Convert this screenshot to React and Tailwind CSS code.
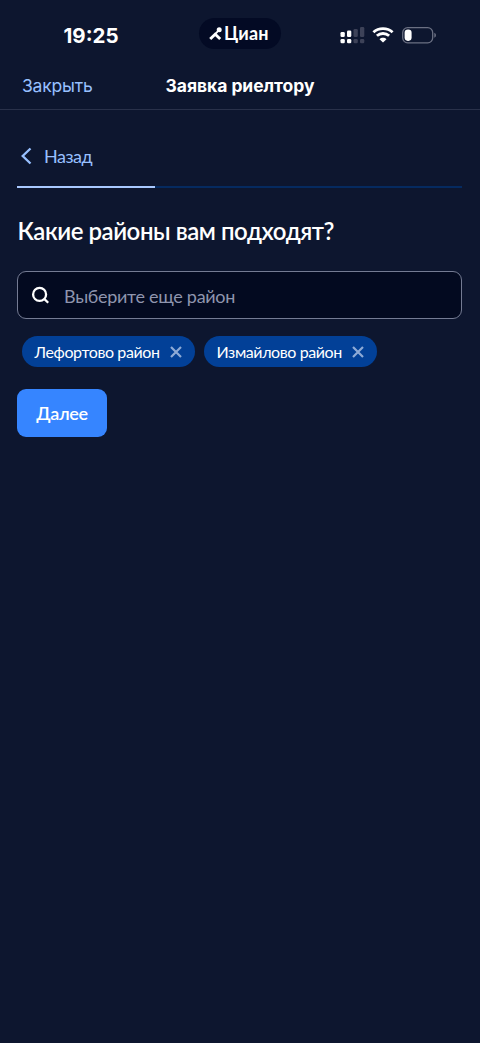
import { useState } from 'react';

const DISTRICTS = ['Лефортово район', 'Измайлово район'];

function CianMark() {
  return (
    <svg width="14" height="14" viewBox="0 0 14 14" fill="none">
      <circle cx="10.2" cy="2.8" r="2.5" fill="#fff" />
      <path d="M9.4 3.6 L6.2 7.2" stroke="#fff" strokeWidth="1.8" />
      <path d="M1.2 12 L6.2 7.2 L11.2 12" stroke="#fff" strokeWidth="2.9" />
    </svg>
  );
}

function Signal() {
  return (
    <svg width="25" height="17" viewBox="0 0 25 17" fill="#fff">
      <rect x="0.5" y="5" width="4.3" height="5" rx="1.3" />
      <rect x="7" y="3.5" width="4.3" height="6.5" rx="1.3" />
      <rect x="13.5" y="2" width="4.3" height="8" rx="1.3" fill="#3d4258" />
      <rect x="20" y="0" width="4.3" height="10" rx="1.3" fill="#3d4258" />
      <rect x="0.5" y="12" width="4.3" height="4.3" rx="1.3" />
      <rect x="7" y="12" width="4.3" height="4.3" rx="1.3" />
      <rect x="13.5" y="12" width="4.3" height="4.3" rx="1.3" fill="#3d4258" />
      <rect x="20" y="12" width="4.3" height="4.3" rx="1.3" fill="#3d4258" />
    </svg>
  );
}

function Wifi() {
  return (
    <svg width="22" height="16" viewBox="0 0 22 16" fill="none" stroke="#fff" strokeWidth="2.8">
      <path d="M1.4 5.2 C6.7 0.3 15.3 0.3 20.6 5.2" />
      <path d="M4.9 8.8 C8.3 5.7 13.7 5.7 17.1 8.8" />
      <path d="M11 15.6 L7.5 12.2 C9.4 10.4 12.6 10.4 14.5 12.2 Z" fill="#fff" stroke="none" />
    </svg>
  );
}

function Battery() {
  return (
    <svg className="ml-[0.5px]" width="35" height="17" viewBox="0 0 35 17" fill="none">
      <rect x="0.7" y="0.7" width="30" height="15.1" rx="5" stroke="#6b7083" strokeWidth="1.3" />
      <rect x="2.6" y="2.6" width="7" height="11.3" rx="3.3" fill="#fff" />
      <path d="M32.3 5.8 C34.5 6.7 34.5 9.9 32.3 10.8 Z" fill="#6b7083" />
    </svg>
  );
}

function StatusBar() {
  return (
    <div className="flex h-[66px] items-start">
      <div className="w-[199px] pt-[21px] pl-[63.5px] font-['Inter',sans-serif] text-[20.5px] leading-[30px] font-bold">
        19:25
      </div>
      <div className="mt-[18px] flex h-[31px] w-[82px] items-center gap-[1px] rounded-full bg-[#030a24] pl-[10px]">
        <CianMark />
        <span className="font-['Lato',sans-serif] text-[18px] leading-[31px] font-bold tracking-[0.2px]">Циан</span>
      </div>
      <div className="mt-[27px] ml-[59px] flex items-start gap-[7px]">
        <Signal />
        <Wifi />
        <Battery />
      </div>
    </div>
  );
}

export default function App() {
  const [selected, setSelected] = useState(DISTRICTS);

  const remove = (name) => setSelected((prev) => prev.filter((item) => item !== name));

  return (
    <div className="min-h-screen w-full bg-[#0d162f] font-['Lato',sans-serif] text-white">
      <StatusBar />

      {/* Sheet header */}
      <header className="grid h-[44px] grid-cols-[1fr_auto_1fr] items-center border-b border-[#29314a] px-[22px] pb-[3px] font-['Inter',sans-serif] text-[17.5px] leading-[40px]">
        <button className="justify-self-start tracking-[-0.2px] text-[#98c0ff]">Закрыть</button>
        <h1 className="font-bold tracking-[-0.05px]">Заявка риелтору</h1>
      </header>

      <main className="pr-[18px] pl-[17px]">
        <button className="mt-[31px] flex h-[30px] items-center text-[18px] tracking-[-0.5px] text-[#98c0ff]">
          <svg className="mr-[12px] ml-[3px]" width="12" height="18" viewBox="0 0 12 18" fill="none">
            <path d="M10.5 1.5 L2.7 9 L10.5 16.5" stroke="#98c0ff" strokeWidth="2.3" />
          </svg>
          Назад
        </button>

        {/* Progress */}
        <div className="mt-[15px] h-[2px] bg-[#052a60]">
          <div className="h-full w-[31%] bg-[#a8c8ff]" />
        </div>

        <h2 className="mt-[27px] pl-[0.5px] text-[24px] leading-[32px] font-semibold tracking-[-0.45px]">Какие районы вам подходят?</h2>

        <label className="mt-[24px] flex h-[48px] items-center rounded-[9px] border border-[#747b93] bg-[#030a20] pl-[13px]">
          <svg width="19" height="19" viewBox="0 0 19 19" fill="none" stroke="#fff" strokeWidth="2.3">
            <circle cx="8.6" cy="8.4" r="6.5" />
            <path d="M13.2 12.9 L17.2 16.8" />
          </svg>
          <input
            className="mt-[2px] ml-[14px] w-[380px] bg-transparent text-[18px] tracking-[-0.3px] outline-none placeholder:text-[#8f95ae]"
            placeholder="Выберите еще район"
          />
        </label>

        <div className="mt-[17px] ml-[5px] flex gap-[9px]">
          {selected.map((name) => (
            <span key={name} className="flex h-[31px] w-[173px] items-center justify-between rounded-full bg-[#024097] pr-[13px] pl-[12.5px] text-[16px] tracking-[-0.4px]">
              {name}
              <button onClick={() => remove(name)}>
                <svg width="12" height="12" viewBox="0 0 12 12" stroke="#8eaad6" strokeWidth="2.2">
                  <path d="M1 1 L11 11 M11 1 L1 11" />
                </svg>
              </button>
            </span>
          ))}
        </div>

        <button className="mt-[22px] h-[48px] w-[90px] rounded-[9px] bg-[#3685ff] text-[18px] font-semibold tracking-[-0.3px]">Далее</button>
      </main>
    </div>
  );
}
